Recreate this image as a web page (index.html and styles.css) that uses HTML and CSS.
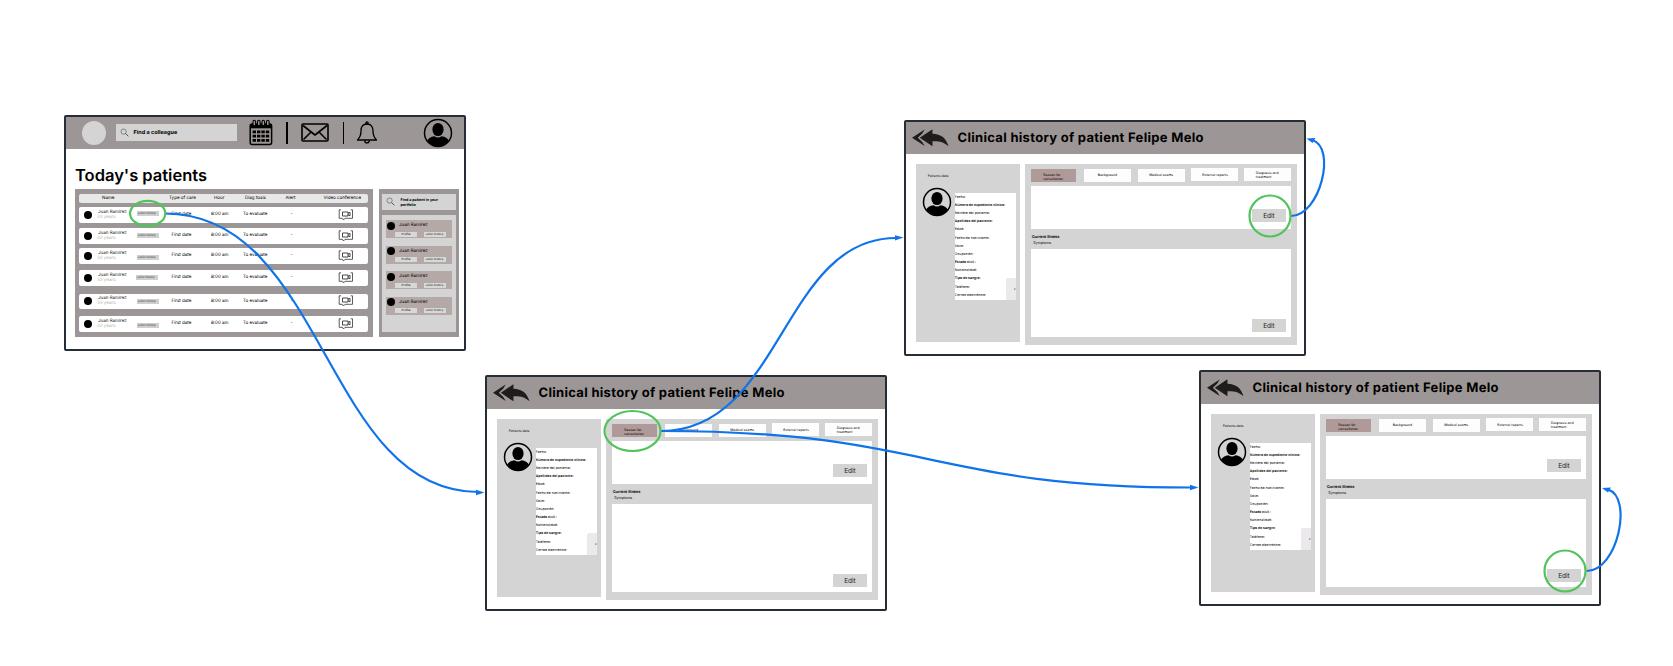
FILE: index.html
```
<!DOCTYPE html>
<html lang="en">
<head>
<meta charset="utf-8">
<title>Patient flow</title>
<link rel="stylesheet" href="styles.css">
</head>
<body>
<svg class="defs" width="0" height="0">
  <symbol id="avatar" viewBox="0 0 30 30"><circle cx="15" cy="15" r="13.5" fill="none" stroke="#000" stroke-width="1.5"/><ellipse cx="15" cy="11.5" rx="5.6" ry="6.6"/><path d="M4.2 22.5Q6 19 11.5 18.2Q15 21 18.5 18.2Q24 19 25.8 22.5Q22 28.6 15 28.6T4.2 22.5Z"/></symbol>
  <symbol id="reply" viewBox="0 0 38 18"><path fill="#1f1d1b" d="M0 8.7 13 0.3 10.6 4.3 6 8.7 10.6 13 13 17.2ZM8 8.7 21 0V4.6C30 4.8 35 9 37.5 17.5 32.5 13 28 12 21 12.3V17.6Z"/></symbol>
  <symbol id="search" viewBox="0 0 10 10"><circle cx="4" cy="4" r="2.9" fill="none" stroke="#555" stroke-width=".7"/><path d="M6.2 6.2 9.3 9.2" stroke="#444" stroke-width="1"/></symbol>
  <symbol id="video" viewBox="0 0 16 12"><g fill="none" stroke="#333"><path stroke-width=".8" d="M3 .8H1.2V9.3H4.5L5.5 11 7 9.3H14.5V.8H12.7"/><path stroke-width=".9" d="M4.5 3H10V7H4.5ZM10 4.3 12 3.3V6.8L10 5.8"/></g></symbol>
</svg>

<main class="board">
  <section class="frame home">
    <header class="topbar">
      <span class="logo"></span>
      <div class="find"><svg class="lens"><use href="#search"/></svg><b>Find a colleague</b></div>
      <svg class="calendar" viewBox="0 0 24 27"><rect x="1.2" y="5" width="21.4" height="20.6" rx="2" fill="none" stroke="#000" stroke-width="1.5"/><path d="M1 5H23V9.3H1Z"/><g fill="#9d9696" stroke="#000" stroke-width="1.1"><path d="M4 6.5V3a1.3 1.8 0 0 1 2.6 0V6.5ZM8.5 6.5V3a1.3 1.8 0 0 1 2.6 0V6.5ZM13 6.5V3a1.3 1.8 0 0 1 2.6 0V6.5ZM17.5 6.5V3a1.3 1.8 0 0 1 2.6 0V6.5Z"/></g><path stroke="#000" stroke-width="2.8" stroke-dasharray="3.4 1" d="M3.6 12.8H21M3.6 17.1H21M3.6 21.4H21"/></svg>
      <i class="rule"></i>
      <svg class="mail" viewBox="0 0 28 19"><g fill="none" stroke="#000" stroke-width="1.6" stroke-linejoin="round"><rect x="1" y="1" width="26" height="17" rx="1"/><path d="M2 2.5 14 12 26 2.5M2.5 16.5 10 9M25.500 16.500 18 9"/></g></svg>
      <i class="rule"></i>
      <svg class="bell" viewBox="0 0 22 23"><g fill="none" stroke="#000" stroke-width="1.3" stroke-linejoin="round"><path d="M11 3C6.500 3 5 6.500 5 10 5 15 4 16.500 1.500 19H20.500C18 16.500 17 15 17 10 17 6.500 15.500 3 11 3Z"/><circle cx="11" cy="2" r="1.1"/><path d="M8.700 19.200a2.300 2.700 0 0 0 4.600 0"/></g></svg>
      <svg class="me"><use href="#avatar"/></svg>
    </header>
    <h1>Today's patients</h1>
    <div class="columns">
      <div class="table">
        <div class="row head"><span></span><span class="h-name">Name</span><span></span><span>Type of care</span><span>Hour</span><span>Diag tosis</span><span>Alert</span><span class="h-video">Video conference</span></div>
        <div class="row r1"><i class="dot"></i><span class="name">Juan Ramirez<small>33 years</small></span><em>Clinic history</em><span>First date</span><span>8:00 am</span><span>To evaluate</span><span>-</span><svg class="cam"><use href="#video"/></svg></div>
        <div class="row r2"><i class="dot"></i><span class="name">Juan Ramirez<small>33 years</small></span><em>Clinic history</em><span>First date</span><span>8:00 am</span><span>To evaluate</span><span>-</span><svg class="cam"><use href="#video"/></svg></div>
        <div class="row r3"><i class="dot"></i><span class="name">Juan Ramirez<small>33 years</small></span><em>Clinic history</em><span>First date</span><span>8:00 am</span><span>To evaluate</span><span>-</span><svg class="cam"><use href="#video"/></svg></div>
        <div class="row r4"><i class="dot"></i><span class="name">Juan Ramirez<small>33 years</small></span><em>Clinic history</em><span>First date</span><span>8:00 am</span><span>To evaluate</span><span>-</span><svg class="cam"><use href="#video"/></svg></div>
        <div class="row r5"><i class="dot"></i><span class="name">Juan Ramirez<small>33 years</small></span><em>Clinic history</em><span>First date</span><span>8:00 am</span><span>To evaluate</span><span>-</span><svg class="cam"><use href="#video"/></svg></div>
        <div class="row r6"><i class="dot"></i><span class="name">Juan Ramirez<small>33 years</small></span><em>Clinic history</em><span>First date</span><span>8:00 am</span><span>To evaluate</span><span>-</span><svg class="cam"><use href="#video"/></svg></div>
      </div>
      <aside class="portfolio">
        <div class="find-patient"><svg class="lens"><use href="#search"/></svg><b>Find a patient in your<br>portfolio</b></div>
        <div class="cards">
          <div class="card"><i class="dot"></i><span>Juan Ramirez</span><div><em>Profile</em><em>Clinic history</em></div></div>
          <div class="card"><i class="dot"></i><span>Juan Ramirez</span><div><em>Profile</em><em>Clinic history</em></div></div>
          <div class="card"><i class="dot"></i><span>Juan Ramirez</span><div><em>Profile</em><em>Clinic history</em></div></div>
          <div class="card"><i class="dot"></i><span>Juan Ramirez</span><div><em>Profile</em><em>Clinic history</em></div></div>
        </div>
      </aside>
    </div>
  </section>

  <section class="frame history h-start">
    <header><svg class="back"><use href="#reply"/></svg><h2>Clinical history of patient Felipe Melo</h2></header>
    <div class="panes">
      <div class="data"><p>Patients data</p><div class="profile"><svg class="face"><use href="#avatar"/></svg>
        <ul><li>Fecha:</li><li><b>Número de expediente clínico:</b></li><li>Nombre del paciente:</li><li><b>Apellidos del paciente:</b></li><li>Edad:</li><li>Fecha de nacimiento:</li><li>Sexo:</li><li>Ocupación:</li><li><b>Estado civil :</b></li><li>Nacionalidad:</li><li><b>Tipo de sangre:</b></li><li>Teléfono:</li><li>Correo electrónico:</li><li class="corner">•</li></ul></div></div>
      <div class="detail">
        <nav><span class="on">Reason for<br>consultation</span><span>Background</span><span>Medical exams</span><span class="up">External reports</span><span class="up last">Diagnosis and<br>treatment</span></nav>
        <div class="box reason"><button>Edit</button></div>
        <div class="caption"><b>Current Illness</b><span>Symptoms</span></div>
        <div class="box illness"><button>Edit</button></div>
      </div>
    </div>
  </section>

  <section class="frame history h-reason">
    <header><svg class="back"><use href="#reply"/></svg><h2>Clinical history of patient Felipe Melo</h2></header>
    <div class="panes">
      <div class="data"><p>Patients data</p><div class="profile"><svg class="face"><use href="#avatar"/></svg>
        <ul><li>Fecha:</li><li><b>Número de expediente clínico:</b></li><li>Nombre del paciente:</li><li><b>Apellidos del paciente:</b></li><li>Edad:</li><li>Fecha de nacimiento:</li><li>Sexo:</li><li>Ocupación:</li><li><b>Estado civil :</b></li><li>Nacionalidad:</li><li><b>Tipo de sangre:</b></li><li>Teléfono:</li><li>Correo electrónico:</li><li class="corner">•</li></ul></div></div>
      <div class="detail">
        <nav><span class="on">Reason for<br>consultation</span><span>Background</span><span>Medical exams</span><span class="up">External reports</span><span class="up last">Diagnosis and<br>treatment</span></nav>
        <div class="box reason"><button>Edit</button></div>
        <div class="caption"><b>Current Illness</b><span>Symptoms</span></div>
        <div class="box illness"><button>Edit</button></div>
      </div>
    </div>
  </section>

  <section class="frame history h-illness">
    <header><svg class="back"><use href="#reply"/></svg><h2>Clinical history of patient Felipe Melo</h2></header>
    <div class="panes">
      <div class="data"><p>Patients data</p><div class="profile"><svg class="face"><use href="#avatar"/></svg>
        <ul><li>Fecha:</li><li><b>Número de expediente clínico:</b></li><li>Nombre del paciente:</li><li><b>Apellidos del paciente:</b></li><li>Edad:</li><li>Fecha de nacimiento:</li><li>Sexo:</li><li>Ocupación:</li><li><b>Estado civil :</b></li><li>Nacionalidad:</li><li><b>Tipo de sangre:</b></li><li>Teléfono:</li><li>Correo electrónico:</li><li class="corner">•</li></ul></div></div>
      <div class="detail">
        <nav><span class="on">Reason for<br>consultation</span><span>Background</span><span>Medical exams</span><span class="up">External reports</span><span class="up last">Diagnosis and<br>treatment</span></nav>
        <div class="box reason"><button>Edit</button></div>
        <div class="caption"><b>Current Illness</b><span>Symptoms</span></div>
        <div class="box illness"><button>Edit</button></div>
      </div>
    </div>
  </section>

  <svg class="links" viewBox="0 0 1673 666">
    <g fill="none" stroke="#0f73ea" stroke-width="2.2">
      <path d="M165 213.500C325 213.500 325 492 478 492"/>
      <path d="M661 431C782 431 782 238 896 238"/>
      <path d="M661 431C930 431 930 487.500 1191 487.500"/>
      <path d="M1291 216C1320 216 1337 147 1312 140"/>
      <path d="M1586.500 571C1618 571 1633 497 1608 489.500"/>
    </g>
    <g fill="#0f73ea">
      <path d="M484.500 492.500 476 489.800V495.200ZM903.500 237.500 895 235.200V240.600ZM1198.500 487.500 1190 484.800V490.200ZM1306.500 138.500 1315.500 138 1312.500 143ZM1602 488 1611 487.500 1608 492.500Z"/>
    </g>
    <g fill="none" stroke="#50c35a" stroke-width="2.2">
      <ellipse cx="147.700" cy="213.400" rx="17.600" ry="12.500"/>
      <ellipse cx="632.500" cy="431" rx="28" ry="20"/>
      <circle cx="1270" cy="216" r="20.500"/>
      <circle cx="1565" cy="571" r="20.500"/>
    </g>
  </svg>
</main>
</body>
</html>
```
FILE: styles.css
```
* { box-sizing: border-box; }
body { margin: 0; background: #fff; color: #000; font-family: Inter, "Liberation Sans", sans-serif; text-rendering: geometricPrecision; }
.defs { position: absolute; }
.board { position: relative; width: 1673px; height: 666px; overflow: hidden; }
.links { position: absolute; inset: 0; width: 1673px; height: 666px; }

/* Frames on the canvas */
.frame { position: absolute; width: 402px; height: 236px; border: 2px solid #262d36; border-radius: 2px; background: #fff; overflow: hidden; }
.home { left: 64px; top: 115px; }
.h-start { left: 485px; top: 375px; }
.h-reason { left: 904px; top: 120px; }
.h-illness { left: 1199px; top: 370px; }
.frame em { font-style: normal; }
.dot { display: block; flex: none; width: 8px; height: 8px; border-radius: 50%; background: #000; }

/* Today's patients */
.topbar { display: flex; align-items: center; height: 31.5px; padding-left: 16px; background: #9d9696; }
.logo { width: 24px; height: 24px; margin-right: 10px; border-radius: 50%; background: #d4d4d4; }
.find { display: flex; align-items: center; width: 121px; height: 17px; padding-left: 4px; background: #d4d4d4; font-size: 5.5px; }
.find .lens { margin-right: 4.500px; }
.lens { flex: none; width: 9px; height: 9px; }
.calendar { width: 24px; height: 27px; margin-left: 12px; margin-right: 13px; }
.rule { width: 1.500px; height: 22px; background: #000; }
.mail { width: 28px; height: 19px; margin: 0 14px 0 13px; }
.bell { width: 22px; height: 23px; margin-left: 11.500px; }
.me { width: 30px; height: 30px; margin-left: 45.500px; }
.home h1 { margin: 16px 0 0 9px; font-size: 16.500px; line-height: 20px; font-weight: 600; white-space: nowrap; }
.columns { display: flex; gap: 6.500px; padding: 4.500px 0 0 8.500px; }
.table { width: 298px; height: 148px; padding: 4.500px 4.500px 0; background: #9d9696; }
.row { display: grid; grid-template-columns: 19px 39px 34.500px 39.500px 32px 47.500px 48.500px auto; align-items: center; height: 15.500px; padding-left: 0; border-radius: 2px; background: #fff; font-size: 4.500px; line-height: 5px; white-space: nowrap; }
.row .dot { margin-left: 5px; }
.row.head { height: 9.500px; margin-bottom: 4px; background: #e8e8e8; }
.h-name { padding-left: 4px; }
.row.head span:nth-child(4) { margin-left: -2.500px; }
.row.head span:nth-child(5) { margin-left: 3px; }
.row.head span:nth-child(6) { margin-left: 2px; }
.row.head span:nth-child(7) { margin-left: -5px; }
.row.head .h-video { margin-left: -15.500px; }
.name { color: #222; }
.name small { display: block; margin-left: -1px; font-size: 4.500px; color: #b5b5b5; }
.row em { width: 22px; height: 5px; padding-left: 1px; background: #cfcfcf; font-size: 2.900px; line-height: 5px; color: #222; }
.cam { width: 16px; height: 12px; margin-left: -1px; }
.r1 { margin-bottom: 5.500px; }
.r2 { margin-bottom: 4.500px; }
.r3 { margin-bottom: 6.500px; }
.r4 { margin-bottom: 8px; }
.r5 { margin-bottom: 7px; }
.r1 em { margin-top: -2px; }
.r3 em { margin-top: 3px; }
.r4 em { margin-left: -1px; }
.r6 em { margin-top: 4px; }
.portfolio { width: 79.500px; height: 148px; padding: 4.500px 3px; background: #9d9696; }
.find-patient { display: flex; align-items: center; height: 16.500px; padding-left: 4px; background: #d4d4d4; font-size: 3.700px; line-height: 5px; white-space: nowrap; }
.find-patient .lens { margin-right: 5.500px; }
.cards { display: flex; flex-direction: column; gap: 7.500px; height: 117.500px; margin-top: 4.500px; padding: 5.500px 4px; background: #d4d4d4; }
.card { display: grid; grid-template-columns: 12px auto; grid-template-rows: 9px 7px; height: 18px; padding: 1.500px 0 0 1px; background: #b5a9a8; font-size: 4.500px; line-height: 8px; white-space: nowrap; }
.card > span { padding-top: .5px; }
.card > div { grid-column: 1 / 3; display: flex; gap: 6.500px; padding-left: 8px; }
.card em { width: 22px; height: 5px; margin-top: 1px; background: #d8d8d8; font-size: 2.900px; line-height: 5px; text-align: center; }

/* Clinical history */
.history header { display: flex; align-items: center; height: 32px; padding-left: 6px; background: #9d9696; }
.back { width: 37px; height: 18px; margin-right: 8.500px; }
.history h2 { margin: 0; font-size: 13px; line-height: 16px; font-weight: 700; letter-spacing: .3px; white-space: nowrap; }
.panes { display: flex; gap: 5.500px; padding: 10.300px 0 0 10.200px; }
.data { width: 103.500px; height: 178px; padding-top: 8.500px; background: #d4d4d4; }
.data p { margin: 0 0 14px 11.500px; font-size: 3.400px; line-height: 6px; }
.profile { display: flex; gap: 2.300px; padding-left: 6.300px; }
.face { flex: none; width: 30px; height: 30px; margin-top: -6px; }
.profile ul { position: relative; width: 61px; height: 107px; margin: 0; padding: 0; list-style: none; background: #fff; font-size: 3.450px; line-height: 8.150px; white-space: nowrap; overflow: hidden; }
.profile ul b { font-size: 3.450px; font-weight: 600; }
.profile .corner { position: absolute; right: 0; bottom: 0; width: 9.500px; height: 22px; padding-top: 7px; border-top-left-radius: 2px; background: #ebe9eb; text-align: right; }
.detail { width: 271.500px; height: 181px; padding: 4.500px 5px 0 5.500px; background: #d4d4d4; }
.detail nav { display: flex; }
.detail nav span { display: flex; align-items: center; justify-content: center; width: 47px; height: 13px; margin-right: 6.800px; background: #fdfdfd; font-size: 3.400px; line-height: 4px; white-space: nowrap; }
.detail nav .on { width: 45px; margin-right: 8.200px; padding-top: 3px; background: #b09a99; }
.detail nav .up { height: 12.500px; margin-top: -.5px; }
.detail nav .up:not(.last) { margin-right: 5.200px; }
.detail nav .last { margin-right: 0; }
.box { display: flex; justify-content: flex-end; align-items: flex-end; width: 260.500px; padding: 0 5px 0 0; background: #fff; }
.reason { height: 43.500px; margin-top: 4px; padding-bottom: 7.500px; }
.illness { height: 87.500px; padding-bottom: 5px; }
.box button { width: 34.500px; height: 13px; padding: 1px 0 0; border: 0; background: #d4d4d4; font: 6.500px/12px Inter, sans-serif; color: #222; }
.caption { height: 20px; padding: 4px 0 0 1px; font-size: 3.900px; line-height: 7px; }
.caption b, .caption span { display: block; }
.caption span { padding-left: 1.500px; font-size: 3.600px; }
```
